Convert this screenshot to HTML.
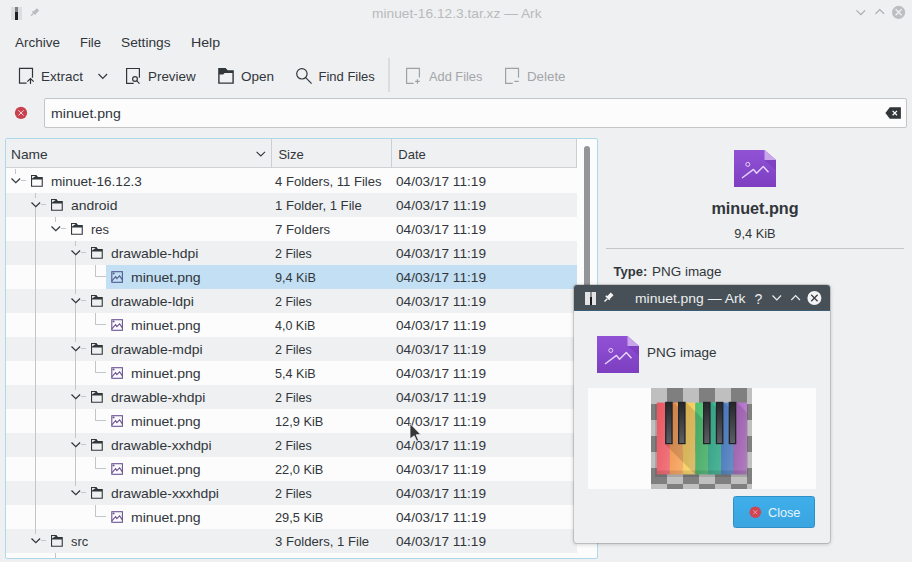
<!DOCTYPE html>
<html><head><meta charset="utf-8">
<style>
*{box-sizing:border-box;margin:0;padding:0}
html,body{width:912px;height:562px;overflow:hidden;background:#eff0f1}
body{position:relative;font-family:"Liberation Sans",sans-serif;font-size:13px;color:#31363b}
.r{position:absolute;white-space:nowrap;line-height:24px;height:24px}
svg{position:absolute;overflow:visible;left:0;top:0}
.b{position:absolute}
</style></head><body>

<div class="b" style="left:11px;top:7px;width:11px;height:13px;background:#dcdddf"></div>
<div class="b" style="left:15px;top:7px;width:3px;height:6px;background:#7d8084"></div>
<div class="b" style="left:15px;top:12px;width:3px;height:8px;background:#1e1f21"></div>
<svg width="1" height="1"><path d="M31 15.8 L33.6 13.2" stroke="#b9bbbe" stroke-width="1.3"/><path d="M32.4 11.2 L35.8 14.6 M33.6 12.4 L36.8 9.2 L38.2 10.6 L35 13.8 Z" stroke="#b9bbbe" stroke-width="1.4" fill="#b9bbbe"/></svg>
<div class="r" style="left:371.5px;top:2px;transform:scaleX(1.057);transform-origin:0 0;color:#b8babc;">minuet-16.12.3.tar.xz — Ark</div>
<svg width="1" height="1"><path d="M856.5 10.3 L860.8 14.6 L865.1 10.3" stroke="#a9acaf" stroke-width="1.2" fill="none"/><path d="M875.5 13.8 L879.8 9.5 L884.1 13.8" stroke="#a9acaf" stroke-width="1.2" fill="none"/><circle cx="898.6" cy="12.3" r="6.6" fill="#bcbfc2"/><path d="M895.6 9.3 L901.6 15.3 M901.6 9.3 L895.6 15.3" stroke="#eff0f1" stroke-width="1.3"/></svg>
<div class="r" style="left:14.7px;top:31px;transform:scaleX(1.035);transform-origin:0 0;">Archive</div>
<div class="r" style="left:80px;top:31px;">File</div>
<div class="r" style="left:121.2px;top:31px;transform:scaleX(1.055);transform-origin:0 0;">Settings</div>
<div class="r" style="left:191.2px;top:31px;transform:scaleX(1.09);transform-origin:0 0;">Help</div>
<svg width="1" height="1"><g fill="none" stroke="#31363b" stroke-width="1.2"><path d="M26.6 83.2 H19.5 V68.3 H32.5 V77.7"/><path d="M30.5 78.8 V84 M27.3 81.6 L30.5 78.5 L33.7 81.6"/><path d="M98.5 74 L102.8 78.3 L107.1 74"/><path d="M133.7 83.4 H126.6 V68.5 H139.4 V77.7"/><circle cx="135" cy="79" r="2.4"/><path d="M136.8 80.8 L139.5 83.6"/><circle cx="301.9" cy="73.8" r="5.2"/><path d="M305.7 77.7 L311.6 83.6"/></g><path fill="#31363b" fill-rule="evenodd" d="M218.2 68.1 H225.6 L227.7 70.2 H233.8 V83.8 H218.2 Z M219.6 74.4 H223.2 L224.6 73.1 H232.4 V82.4 H219.6 Z"/><g fill="none" stroke="#9fa2a5" stroke-width="1.2"><path d="M413.6 83.4 H406.6 V68.3 H419.4 V77.6"/><path d="M415.2 81.4 H419.7 M417.4 79.2 V83.7"/><path d="M512.8 83.4 H505.6 V68.3 H518.5 V77.7"/><path d="M514.3 81.4 H518.8"/></g><rect x="388.5" y="58" width="1" height="34" fill="#c5c7c9"/></svg>
<div class="r" style="left:41px;top:65px;transform:scaleX(1.035);transform-origin:0 0;">Extract</div>
<div class="r" style="left:147.5px;top:65px;transform:scaleX(1.03);transform-origin:0 0;">Preview</div>
<div class="r" style="left:241.2px;top:65px;transform:scaleX(1.04);transform-origin:0 0;">Open</div>
<div class="r" style="left:318.5px;top:65px;">Find Files</div>
<div class="r" style="left:428.7px;top:65px;transform:scaleX(0.985);transform-origin:0 0;color:#a3a6a9;">Add Files</div>
<div class="r" style="left:527.4px;top:65px;transform:scaleX(1.025);transform-origin:0 0;color:#a3a6a9;">Delete</div>
<svg width="1" height="1"><circle cx="21" cy="112.9" r="6.1" fill="#c9404e"/><path d="M18.4 110.3 L23.6 115.5 M23.6 110.3 L18.4 115.5" stroke="#f6dfe2" stroke-width="1"/></svg>
<div class="b" style="left:44px;top:98px;width:863px;height:30px;background:#fcfcfc;border:1px solid #c3c5c7;border-radius:2px"></div>
<div class="r" style="left:50.6px;top:102px;transform:scaleX(1.085);transform-origin:0 0;">minuet.png</div>
<svg width="1" height="1"><path d="M885.4 113 L889.8 107.2 H900.9 V118.7 H889.8 Z" fill="#31363b"/><path d="M892.6 110.9 L897 115.3 M897 110.9 L892.6 115.3" stroke="#fcfcfc" stroke-width="1.3"/></svg>
<div class="b" style="left:5px;top:138px;width:593px;height:421px;background:#fcfcfc;border:1px solid #b0d8eb;border-radius:2px"></div>
<div class="b" style="left:6px;top:139px;width:571px;height:29px;background:#eff0f1;border-bottom:1px solid #cfd1d3"></div>
<div class="b" style="left:271px;top:139px;width:1px;height:29px;background:#cdd0d2"></div>
<div class="b" style="left:391px;top:139px;width:1px;height:29px;background:#cdd0d2"></div>
<div class="b" style="left:576px;top:139px;width:1px;height:29px;background:#cdd0d2"></div>
<div class="r" style="left:11.4px;top:143px;transform:scaleX(1.06);transform-origin:0 0;">Name</div>
<div class="r" style="left:278.4px;top:143px;">Size</div>
<div class="r" style="left:398.3px;top:143px;">Date</div>
<svg width="1" height="1"><path d="M256.6 151.8 L260.8 156 L265 151.8" stroke="#31363b" stroke-width="1.1" fill="none"/></svg>
<div class="b" style="left:6px;top:193px;width:571px;height:24px;background:#eff0f1"></div>
<div class="b" style="left:6px;top:241px;width:571px;height:24px;background:#eff0f1"></div>
<div class="b" style="left:6px;top:289px;width:571px;height:24px;background:#eff0f1"></div>
<div class="b" style="left:6px;top:337px;width:571px;height:24px;background:#eff0f1"></div>
<div class="b" style="left:6px;top:385px;width:571px;height:24px;background:#eff0f1"></div>
<div class="b" style="left:6px;top:433px;width:571px;height:24px;background:#eff0f1"></div>
<div class="b" style="left:6px;top:481px;width:571px;height:24px;background:#eff0f1"></div>
<div class="b" style="left:6px;top:529px;width:571px;height:24px;background:#eff0f1"></div>
<div class="b" style="left:106px;top:265px;width:471px;height:24px;background:#c2dff3"></div>
<svg width="1" height="1"><g fill="#c3c5c7"><rect x="15" y="169" width="1" height="5"/><rect x="21" y="180" width="5" height="1"/><rect x="35" y="193" width="1" height="5"/><rect x="35" y="207" width="1" height="10"/><rect x="41" y="204" width="5" height="1"/><rect x="35" y="217" width="1" height="24"/><rect x="55" y="217" width="1" height="5"/><rect x="61" y="228" width="5" height="1"/><rect x="35" y="241" width="1" height="24"/><rect x="75" y="241" width="1" height="5"/><rect x="75" y="255" width="1" height="10"/><rect x="81" y="252" width="5" height="1"/><rect x="75" y="265" width="1" height="24"/><rect x="35" y="265" width="1" height="24"/><rect x="95" y="265" width="1" height="12"/><rect x="95" y="276" width="11" height="1"/><rect x="35" y="289" width="1" height="24"/><rect x="75" y="289" width="1" height="5"/><rect x="75" y="303" width="1" height="10"/><rect x="81" y="300" width="5" height="1"/><rect x="75" y="313" width="1" height="24"/><rect x="35" y="313" width="1" height="24"/><rect x="95" y="313" width="1" height="12"/><rect x="95" y="324" width="11" height="1"/><rect x="35" y="337" width="1" height="24"/><rect x="75" y="337" width="1" height="5"/><rect x="75" y="351" width="1" height="10"/><rect x="81" y="348" width="5" height="1"/><rect x="75" y="361" width="1" height="24"/><rect x="35" y="361" width="1" height="24"/><rect x="95" y="361" width="1" height="12"/><rect x="95" y="372" width="11" height="1"/><rect x="35" y="385" width="1" height="24"/><rect x="75" y="385" width="1" height="5"/><rect x="75" y="399" width="1" height="10"/><rect x="81" y="396" width="5" height="1"/><rect x="75" y="409" width="1" height="24"/><rect x="35" y="409" width="1" height="24"/><rect x="95" y="409" width="1" height="12"/><rect x="95" y="420" width="11" height="1"/><rect x="35" y="433" width="1" height="24"/><rect x="75" y="433" width="1" height="5"/><rect x="75" y="447" width="1" height="10"/><rect x="81" y="444" width="5" height="1"/><rect x="75" y="457" width="1" height="24"/><rect x="35" y="457" width="1" height="24"/><rect x="95" y="457" width="1" height="12"/><rect x="95" y="468" width="11" height="1"/><rect x="35" y="481" width="1" height="24"/><rect x="75" y="481" width="1" height="5"/><rect x="81" y="492" width="5" height="1"/><rect x="35" y="505" width="1" height="24"/><rect x="95" y="505" width="1" height="12"/><rect x="95" y="516" width="11" height="1"/><rect x="35" y="529" width="1" height="5"/><rect x="41" y="540" width="5" height="1"/><rect x="55" y="553" width="1" height="5"/></g></svg>
<div class="r" style="left:51px;top:170px;transform:scaleX(1.047);transform-origin:0 0;">minuet-16.12.3</div>
<div class="r" style="left:275.3px;top:170px;transform:scaleX(1.005);transform-origin:0 0;">4 Folders, 11 Files</div>
<div class="r" style="left:395.5px;top:170px;transform:scaleX(1.049);transform-origin:0 0;">04/03/17 11:19</div>
<div class="r" style="left:71px;top:194px;transform:scaleX(1.07);transform-origin:0 0;">android</div>
<div class="r" style="left:275.3px;top:194px;transform:scaleX(1.009);transform-origin:0 0;">1 Folder, 1 File</div>
<div class="r" style="left:395.5px;top:194px;transform:scaleX(1.049);transform-origin:0 0;">04/03/17 11:19</div>
<div class="r" style="left:91px;top:218px;">res</div>
<div class="r" style="left:275.3px;top:218px;transform:scaleX(1.018);transform-origin:0 0;">7 Folders</div>
<div class="r" style="left:395.5px;top:218px;transform:scaleX(1.049);transform-origin:0 0;">04/03/17 11:19</div>
<div class="r" style="left:111px;top:242px;transform:scaleX(1.068);transform-origin:0 0;">drawable-hdpi</div>
<div class="r" style="left:275.3px;top:242px;transform:scaleX(0.96);transform-origin:0 0;">2 Files</div>
<div class="r" style="left:395.5px;top:242px;transform:scaleX(1.049);transform-origin:0 0;">04/03/17 11:19</div>
<div class="r" style="left:131px;top:266px;transform:scaleX(1.083);transform-origin:0 0;">minuet.png</div>
<div class="r" style="left:275.3px;top:266px;transform:scaleX(0.974);transform-origin:0 0;">9,4 KiB</div>
<div class="r" style="left:395.5px;top:266px;transform:scaleX(1.049);transform-origin:0 0;">04/03/17 11:19</div>
<div class="r" style="left:111px;top:290px;transform:scaleX(1.072);transform-origin:0 0;">drawable-ldpi</div>
<div class="r" style="left:275.3px;top:290px;transform:scaleX(0.96);transform-origin:0 0;">2 Files</div>
<div class="r" style="left:395.5px;top:290px;transform:scaleX(1.049);transform-origin:0 0;">04/03/17 11:19</div>
<div class="r" style="left:131px;top:314px;transform:scaleX(1.083);transform-origin:0 0;">minuet.png</div>
<div class="r" style="left:275.3px;top:314px;transform:scaleX(0.96);transform-origin:0 0;">4,0 KiB</div>
<div class="r" style="left:395.5px;top:314px;transform:scaleX(1.049);transform-origin:0 0;">04/03/17 11:19</div>
<div class="r" style="left:111px;top:338px;transform:scaleX(1.074);transform-origin:0 0;">drawable-mdpi</div>
<div class="r" style="left:275.3px;top:338px;transform:scaleX(0.96);transform-origin:0 0;">2 Files</div>
<div class="r" style="left:395.5px;top:338px;transform:scaleX(1.049);transform-origin:0 0;">04/03/17 11:19</div>
<div class="r" style="left:131px;top:362px;transform:scaleX(1.083);transform-origin:0 0;">minuet.png</div>
<div class="r" style="left:275.3px;top:362px;transform:scaleX(0.97);transform-origin:0 0;">5,4 KiB</div>
<div class="r" style="left:395.5px;top:362px;transform:scaleX(1.049);transform-origin:0 0;">04/03/17 11:19</div>
<div class="r" style="left:111px;top:386px;transform:scaleX(1.07);transform-origin:0 0;">drawable-xhdpi</div>
<div class="r" style="left:275.3px;top:386px;transform:scaleX(0.96);transform-origin:0 0;">2 Files</div>
<div class="r" style="left:395.5px;top:386px;transform:scaleX(1.049);transform-origin:0 0;">04/03/17 11:19</div>
<div class="r" style="left:131px;top:410px;transform:scaleX(1.083);transform-origin:0 0;">minuet.png</div>
<div class="r" style="left:275.3px;top:410px;transform:scaleX(0.985);transform-origin:0 0;">12,9 KiB</div>
<div class="r" style="left:395.5px;top:410px;transform:scaleX(1.049);transform-origin:0 0;">04/03/17 11:19</div>
<div class="r" style="left:111px;top:434px;transform:scaleX(1.063);transform-origin:0 0;">drawable-xxhdpi</div>
<div class="r" style="left:275.3px;top:434px;transform:scaleX(0.96);transform-origin:0 0;">2 Files</div>
<div class="r" style="left:395.5px;top:434px;transform:scaleX(1.049);transform-origin:0 0;">04/03/17 11:19</div>
<div class="r" style="left:131px;top:458px;transform:scaleX(1.083);transform-origin:0 0;">minuet.png</div>
<div class="r" style="left:275.3px;top:458px;transform:scaleX(0.985);transform-origin:0 0;">22,0 KiB</div>
<div class="r" style="left:395.5px;top:458px;transform:scaleX(1.049);transform-origin:0 0;">04/03/17 11:19</div>
<div class="r" style="left:111px;top:482px;transform:scaleX(1.067);transform-origin:0 0;">drawable-xxxhdpi</div>
<div class="r" style="left:275.3px;top:482px;transform:scaleX(0.96);transform-origin:0 0;">2 Files</div>
<div class="r" style="left:395.5px;top:482px;transform:scaleX(1.049);transform-origin:0 0;">04/03/17 11:19</div>
<div class="r" style="left:131px;top:506px;transform:scaleX(1.083);transform-origin:0 0;">minuet.png</div>
<div class="r" style="left:275.3px;top:506px;transform:scaleX(0.985);transform-origin:0 0;">29,5 KiB</div>
<div class="r" style="left:395.5px;top:506px;transform:scaleX(1.049);transform-origin:0 0;">04/03/17 11:19</div>
<div class="r" style="left:71px;top:530px;transform:scaleX(0.99);transform-origin:0 0;">src</div>
<div class="r" style="left:275.3px;top:530px;transform:scaleX(1.01);transform-origin:0 0;">3 Folders, 1 File</div>
<div class="r" style="left:395.5px;top:530px;transform:scaleX(1.049);transform-origin:0 0;">04/03/17 11:19</div>
<svg width="1" height="1"><path d="M11.5 178.5 L15.8 182.6 L20.1 178.5" fill="none" stroke="#31363b" stroke-width="1.25"/><path fill="#31363b" fill-rule="evenodd" d="M31.0 175 H36.4 L38.0 176.9 H42.8 V186.7 H31.0 Z M32.1 179.4 H41.7 V185.7 H32.1 Z M32.1 176 H35.6 L32.1 178.4 Z"/><path d="M31.5 202.5 L35.8 206.6 L40.1 202.5" fill="none" stroke="#31363b" stroke-width="1.25"/><path fill="#31363b" fill-rule="evenodd" d="M51.0 199 H56.4 L58.0 200.9 H62.8 V210.7 H51.0 Z M52.1 203.4 H61.7 V209.7 H52.1 Z M52.1 200 H55.6 L52.1 202.4 Z"/><path d="M51.5 226.5 L55.8 230.6 L60.1 226.5" fill="none" stroke="#31363b" stroke-width="1.25"/><path fill="#31363b" fill-rule="evenodd" d="M71.0 223 H76.4 L78.0 224.9 H82.8 V234.7 H71.0 Z M72.1 227.4 H81.7 V233.7 H72.1 Z M72.1 224 H75.6 L72.1 226.4 Z"/><path d="M71.5 250.5 L75.8 254.6 L80.1 250.5" fill="none" stroke="#31363b" stroke-width="1.25"/><path fill="#31363b" fill-rule="evenodd" d="M91.0 247 H96.4 L98.0 248.9 H102.8 V258.7 H91.0 Z M92.1 251.4 H101.7 V257.7 H92.1 Z M92.1 248 H95.6 L92.1 250.4 Z"/><g fill="none" stroke="#535a8c" stroke-width="1.1"><rect x="111.8" y="271.7" width="10.6" height="10.6"/><path d="M111.8 280.8 L115.6 276.59999999999997 L116.89999999999999 278.59999999999997 L119.6 275.9 L122.3 279.59999999999997"/></g><circle cx="113.6" cy="273.5" r="1" fill="#535a8c"/><path d="M71.5 298.5 L75.8 302.6 L80.1 298.5" fill="none" stroke="#31363b" stroke-width="1.25"/><path fill="#31363b" fill-rule="evenodd" d="M91.0 295 H96.4 L98.0 296.9 H102.8 V306.7 H91.0 Z M92.1 299.4 H101.7 V305.7 H92.1 Z M92.1 296 H95.6 L92.1 298.4 Z"/><g fill="none" stroke="#6e5294" stroke-width="1.1"><rect x="111.8" y="319.7" width="10.6" height="10.6"/><path d="M111.8 328.8 L115.6 324.59999999999997 L116.89999999999999 326.59999999999997 L119.6 323.9 L122.3 327.59999999999997"/></g><circle cx="113.6" cy="321.5" r="1" fill="#6e5294"/><path d="M71.5 346.5 L75.8 350.6 L80.1 346.5" fill="none" stroke="#31363b" stroke-width="1.25"/><path fill="#31363b" fill-rule="evenodd" d="M91.0 343 H96.4 L98.0 344.9 H102.8 V354.7 H91.0 Z M92.1 347.4 H101.7 V353.7 H92.1 Z M92.1 344 H95.6 L92.1 346.4 Z"/><g fill="none" stroke="#6e5294" stroke-width="1.1"><rect x="111.8" y="367.7" width="10.6" height="10.6"/><path d="M111.8 376.8 L115.6 372.59999999999997 L116.89999999999999 374.59999999999997 L119.6 371.9 L122.3 375.59999999999997"/></g><circle cx="113.6" cy="369.5" r="1" fill="#6e5294"/><path d="M71.5 394.5 L75.8 398.6 L80.1 394.5" fill="none" stroke="#31363b" stroke-width="1.25"/><path fill="#31363b" fill-rule="evenodd" d="M91.0 391 H96.4 L98.0 392.9 H102.8 V402.7 H91.0 Z M92.1 395.4 H101.7 V401.7 H92.1 Z M92.1 392 H95.6 L92.1 394.4 Z"/><g fill="none" stroke="#6e5294" stroke-width="1.1"><rect x="111.8" y="415.7" width="10.6" height="10.6"/><path d="M111.8 424.8 L115.6 420.59999999999997 L116.89999999999999 422.59999999999997 L119.6 419.9 L122.3 423.59999999999997"/></g><circle cx="113.6" cy="417.5" r="1" fill="#6e5294"/><path d="M71.5 442.5 L75.8 446.6 L80.1 442.5" fill="none" stroke="#31363b" stroke-width="1.25"/><path fill="#31363b" fill-rule="evenodd" d="M91.0 439 H96.4 L98.0 440.9 H102.8 V450.7 H91.0 Z M92.1 443.4 H101.7 V449.7 H92.1 Z M92.1 440 H95.6 L92.1 442.4 Z"/><g fill="none" stroke="#6e5294" stroke-width="1.1"><rect x="111.8" y="463.7" width="10.6" height="10.6"/><path d="M111.8 472.8 L115.6 468.59999999999997 L116.89999999999999 470.59999999999997 L119.6 467.9 L122.3 471.59999999999997"/></g><circle cx="113.6" cy="465.5" r="1" fill="#6e5294"/><path d="M71.5 490.5 L75.8 494.6 L80.1 490.5" fill="none" stroke="#31363b" stroke-width="1.25"/><path fill="#31363b" fill-rule="evenodd" d="M91.0 487 H96.4 L98.0 488.9 H102.8 V498.7 H91.0 Z M92.1 491.4 H101.7 V497.7 H92.1 Z M92.1 488 H95.6 L92.1 490.4 Z"/><g fill="none" stroke="#6e5294" stroke-width="1.1"><rect x="111.8" y="511.7" width="10.6" height="10.6"/><path d="M111.8 520.8 L115.6 516.6 L116.89999999999999 518.6 L119.6 515.9 L122.3 519.6"/></g><circle cx="113.6" cy="513.5" r="1" fill="#6e5294"/><path d="M31.5 538.5 L35.8 542.6 L40.1 538.5" fill="none" stroke="#31363b" stroke-width="1.25"/><path fill="#31363b" fill-rule="evenodd" d="M51.0 535 H56.4 L58.0 536.9 H62.8 V546.7 H51.0 Z M52.1 539.4 H61.7 V545.7 H52.1 Z M52.1 536 H55.6 L52.1 538.4 Z"/></svg>
<div class="b" style="left:584px;top:146px;width:6px;height:380px;background:#939598;border-radius:3px"></div>
<svg style="left:734px;top:150px" width="42" height="37" viewBox="0 0 42 37"><defs><linearGradient id="g1" x1="0" y1="0" x2="0" y2="1"><stop offset="0" stop-color="#9152d6"/><stop offset="1" stop-color="#7d3fc0"/></linearGradient></defs><path d="M0 0 H30.5 L42 10 V37 H0 Z" fill="url(#g1)"/><path d="M30.5 0 L42 10 H30.5 Z" fill="#c9a6ea"/><path d="M30.5 10 L42 20 V10 Z" fill="#6a2fa8" opacity="0.35"/><path d="M8 28 L19.5 19.4 L22.5 23.3 L29.3 16.4 L34.5 22.3" fill="none" stroke="#e6d4f7" stroke-width="1.45" stroke-linejoin="round"/><circle cx="13.8" cy="14.4" r="2" fill="none" stroke="#e6d4f7" stroke-width="1"/></svg>
<div class="r" style="left:605px;width:300px;text-align:center;top:196px;font-weight:bold;font-size:16.2px">minuet.png</div>
<div class="r" style="left:605px;width:300px;text-align:center;top:222px;font-size:12.8px">9,4 KiB</div>
<div class="b" style="left:606px;top:248px;width:298px;height:1px;background:#c3c5c7"></div>
<div class="r" style="left:613.5px;top:260px;font-weight:bold">Type:</div>
<div class="r" style="left:652.3px;top:260px;transform:scaleX(1.035);transform-origin:0 0;">PNG image</div>
<div class="b" style="left:574px;top:285px;width:256px;height:258px;background:#eff0f1;border-radius:3px;box-shadow:0 0 0 1px rgba(0,0,0,0.13),0 1px 4px rgba(0,0,0,0.22);overflow:hidden"><div class="b" style="left:0;top:0;width:256px;height:25px;background:#475057"></div><div class="b" style="left:0;top:25px;width:256px;height:1px;background:#3d5d75"></div></div>
<div class="b" style="left:585px;top:292px;width:11px;height:13px;background:#e2e3e4"></div>
<div class="b" style="left:589.5px;top:292px;width:2px;height:6px;background:#8a8c8f"></div>
<div class="b" style="left:589.5px;top:297px;width:2.2px;height:8px;background:#1c1c1c"></div>
<svg width="1" height="1"><path d="M604.5 301.5 L607.3 298.7" stroke="#f4f4f4" stroke-width="1.4"/><path d="M605.8 295.8 L609.7 299.7 M607.4 297.0 L610.8 293.6 L612.4 295.2 L609.0 298.6 Z" stroke="#f4f4f4" stroke-width="1.6" fill="#f4f4f4"/></svg>
<div class="r" style="left:634.9px;top:286.5px;transform:scaleX(1.07);transform-origin:0 0;color:#eceeef;">minuet.png — Ark</div>
<div class="r" style="left:754.5px;top:286.5px;color:#eceeef;font-size:14px;">?</div>
<svg width="1" height="1"><path d="M772.5 295.5 L776.8 300 L781 295.5" stroke="#eceeef" stroke-width="1.2" fill="none"/><path d="M791.3 300 L795.6 295.5 L799.9 300" stroke="#eceeef" stroke-width="1.2" fill="none"/><circle cx="814.4" cy="298" r="7" fill="#f3f4f5"/><path d="M811.2 294.8 L817.6 301.2 M817.6 294.8 L811.2 301.2" stroke="#3b4046" stroke-width="1.3"/></svg>
<svg style="left:597px;top:336px" width="42" height="37" viewBox="0 0 42 37"><defs><linearGradient id="g2" x1="0" y1="0" x2="0" y2="1"><stop offset="0" stop-color="#9152d6"/><stop offset="1" stop-color="#7d3fc0"/></linearGradient></defs><path d="M0 0 H30.5 L42 10 V37 H0 Z" fill="url(#g2)"/><path d="M30.5 0 L42 10 H30.5 Z" fill="#c9a6ea"/><path d="M30.5 10 L42 20 V10 Z" fill="#6a2fa8" opacity="0.35"/><path d="M8 28 L19.5 19.4 L22.5 23.3 L29.3 16.4 L34.5 22.3" fill="none" stroke="#e6d4f7" stroke-width="1.45" stroke-linejoin="round"/><circle cx="13.8" cy="14.4" r="2" fill="none" stroke="#e6d4f7" stroke-width="1"/></svg>
<div class="r" style="left:647.2px;top:341px;transform:scaleX(1.035);transform-origin:0 0;">PNG image</div>
<div class="b" style="left:588px;top:388px;width:228px;height:101px;background:#fcfcfc"></div>
<svg width="1" height="1"><defs><linearGradient id="k0" x1="0" y1="0" x2="1" y2="1"><stop offset="0" stop-color="#e85560"/><stop offset="1" stop-color="#f27880"/></linearGradient><linearGradient id="k1" x1="0" y1="0" x2="1" y2="1"><stop offset="0" stop-color="#ee9250"/><stop offset="1" stop-color="#f8b070"/></linearGradient><linearGradient id="k2" x1="0" y1="0" x2="1" y2="1"><stop offset="0" stop-color="#f5c655"/><stop offset="1" stop-color="#fcdc80"/></linearGradient><linearGradient id="k3" x1="0" y1="0" x2="1" y2="1"><stop offset="0" stop-color="#4cc070"/><stop offset="1" stop-color="#70d690"/></linearGradient><linearGradient id="k4" x1="0" y1="0" x2="1" y2="1"><stop offset="0" stop-color="#38b896"/><stop offset="1" stop-color="#5dd0b0"/></linearGradient><linearGradient id="k5" x1="0" y1="0" x2="1" y2="1"><stop offset="0" stop-color="#5284d2"/><stop offset="1" stop-color="#74a8e6"/></linearGradient><linearGradient id="k6" x1="0" y1="0" x2="1" y2="1"><stop offset="0" stop-color="#ae68c4"/><stop offset="1" stop-color="#cc90dc"/></linearGradient><linearGradient id="bk" x1="0" y1="0" x2="0" y2="1"><stop offset="0" stop-color="#26272b"/><stop offset="1" stop-color="#5b5e63"/></linearGradient></defs><rect x="651" y="388" width="16" height="16" fill="#bfbfbf"/><rect x="667" y="388" width="16" height="16" fill="#7f7f7f"/><rect x="683" y="388" width="16" height="16" fill="#bfbfbf"/><rect x="699" y="388" width="16" height="16" fill="#7f7f7f"/><rect x="715" y="388" width="16" height="16" fill="#bfbfbf"/><rect x="731" y="388" width="16" height="16" fill="#7f7f7f"/><rect x="747" y="388" width="5" height="16" fill="#bfbfbf"/><rect x="651" y="404" width="16" height="16" fill="#7f7f7f"/><rect x="667" y="404" width="16" height="16" fill="#bfbfbf"/><rect x="683" y="404" width="16" height="16" fill="#7f7f7f"/><rect x="699" y="404" width="16" height="16" fill="#bfbfbf"/><rect x="715" y="404" width="16" height="16" fill="#7f7f7f"/><rect x="731" y="404" width="16" height="16" fill="#bfbfbf"/><rect x="747" y="404" width="5" height="16" fill="#7f7f7f"/><rect x="651" y="420" width="16" height="16" fill="#bfbfbf"/><rect x="667" y="420" width="16" height="16" fill="#7f7f7f"/><rect x="683" y="420" width="16" height="16" fill="#bfbfbf"/><rect x="699" y="420" width="16" height="16" fill="#7f7f7f"/><rect x="715" y="420" width="16" height="16" fill="#bfbfbf"/><rect x="731" y="420" width="16" height="16" fill="#7f7f7f"/><rect x="747" y="420" width="5" height="16" fill="#bfbfbf"/><rect x="651" y="436" width="16" height="16" fill="#7f7f7f"/><rect x="667" y="436" width="16" height="16" fill="#bfbfbf"/><rect x="683" y="436" width="16" height="16" fill="#7f7f7f"/><rect x="699" y="436" width="16" height="16" fill="#bfbfbf"/><rect x="715" y="436" width="16" height="16" fill="#7f7f7f"/><rect x="731" y="436" width="16" height="16" fill="#bfbfbf"/><rect x="747" y="436" width="5" height="16" fill="#7f7f7f"/><rect x="651" y="452" width="16" height="16" fill="#bfbfbf"/><rect x="667" y="452" width="16" height="16" fill="#7f7f7f"/><rect x="683" y="452" width="16" height="16" fill="#bfbfbf"/><rect x="699" y="452" width="16" height="16" fill="#7f7f7f"/><rect x="715" y="452" width="16" height="16" fill="#bfbfbf"/><rect x="731" y="452" width="16" height="16" fill="#7f7f7f"/><rect x="747" y="452" width="5" height="16" fill="#bfbfbf"/><rect x="651" y="468" width="16" height="16" fill="#7f7f7f"/><rect x="667" y="468" width="16" height="16" fill="#bfbfbf"/><rect x="683" y="468" width="16" height="16" fill="#7f7f7f"/><rect x="699" y="468" width="16" height="16" fill="#bfbfbf"/><rect x="715" y="468" width="16" height="16" fill="#7f7f7f"/><rect x="731" y="468" width="16" height="16" fill="#bfbfbf"/><rect x="747" y="468" width="5" height="16" fill="#7f7f7f"/><rect x="651" y="484" width="16" height="5" fill="#bfbfbf"/><rect x="667" y="484" width="16" height="5" fill="#7f7f7f"/><rect x="683" y="484" width="16" height="5" fill="#bfbfbf"/><rect x="699" y="484" width="16" height="5" fill="#7f7f7f"/><rect x="715" y="484" width="16" height="5" fill="#bfbfbf"/><rect x="731" y="484" width="16" height="5" fill="#7f7f7f"/><rect x="747" y="484" width="5" height="5" fill="#bfbfbf"/><rect x="655" y="404" width="93" height="73" fill="#000" opacity="0.12"/><rect x="656.8" y="402.6" width="13.10000000000009" height="71.8" fill="url(#k0)"/><rect x="669.7" y="402.6" width="12.999999999999954" height="71.8" fill="url(#k1)"/><rect x="682.5" y="402.6" width="13.099999999999977" height="71.8" fill="url(#k2)"/><rect x="695.4" y="402.6" width="13.000000000000068" height="71.8" fill="url(#k3)"/><rect x="708.2" y="402.6" width="13.099999999999977" height="71.8" fill="url(#k4)"/><rect x="721.1" y="402.6" width="12.499999999999954" height="71.8" fill="url(#k5)"/><rect x="733.4" y="402.6" width="13.599999999999977" height="71.8" fill="url(#k6)"/><clipPath id="kc"><rect x="656.8" y="402.6" width="90" height="71.8"/></clipPath><g clip-path="url(#kc)" opacity="0.13"><path d="M672.7 401.8 L745.3000000000001 474.4 L695.3000000000001 474.4 L665.1 444.2 Z" fill="#000"/><path d="M685.6 401.8 L758.2 474.4 L708.2 474.4 L678.0 444.2 Z" fill="#000"/><path d="M710.6 401.8 L783.2 474.4 L733.2 474.4 L703.0 444.2 Z" fill="#000"/><path d="M723.4 401.8 L796.0 474.4 L746.0 474.4 L715.8 444.2 Z" fill="#000"/><path d="M736.3000000000001 401.8 L808.9000000000001 474.4 L758.9000000000001 474.4 L728.7 444.2 Z" fill="#000"/></g><rect x="656.8" y="470.5" width="90" height="4" fill="#000" opacity="0.1"/><rect x="665.1" y="401.8" width="7.6" height="42.4" fill="#222327"/><rect x="666.4" y="403" width="5" height="40" fill="url(#bk)"/><rect x="678.0" y="401.8" width="7.6" height="42.4" fill="#222327"/><rect x="679.3" y="403" width="5" height="40" fill="url(#bk)"/><rect x="703.0" y="401.8" width="7.6" height="42.4" fill="#222327"/><rect x="704.3" y="403" width="5" height="40" fill="url(#bk)"/><rect x="715.8" y="401.8" width="7.6" height="42.4" fill="#222327"/><rect x="717.0999999999999" y="403" width="5" height="40" fill="url(#bk)"/><rect x="728.7" y="401.8" width="7.6" height="42.4" fill="#222327"/><rect x="730.0" y="403" width="5" height="40" fill="url(#bk)"/></svg>
<div class="b" style="left:733px;top:496px;width:82px;height:32px;background:linear-gradient(#3eaeea,#3aa5e0);border:1px solid #2f90c6;border-radius:2.5px"></div>
<svg width="1" height="1"><circle cx="755.3" cy="512.2" r="5.8" fill="#d04552"/><path d="M753.3 510.2 L757.3 514.2 M757.3 510.2 L753.3 514.2" stroke="#ef9aa4" stroke-width="1"/></svg>
<div class="r" style="left:768.2px;top:500.5px;transform:scaleX(0.975);transform-origin:0 0;color:#e6f5fd;">Close</div>
<svg width="1" height="1"><path d="M410 423.6 L420.8 434.6 L416.2 434.8 L418.6 440.2 L416.8 441.4 L414.2 435.8 L410 438.8 Z" fill="#363738" stroke="#f4f4f4" stroke-width="0.8" stroke-linejoin="round"/></svg>
</body></html>
